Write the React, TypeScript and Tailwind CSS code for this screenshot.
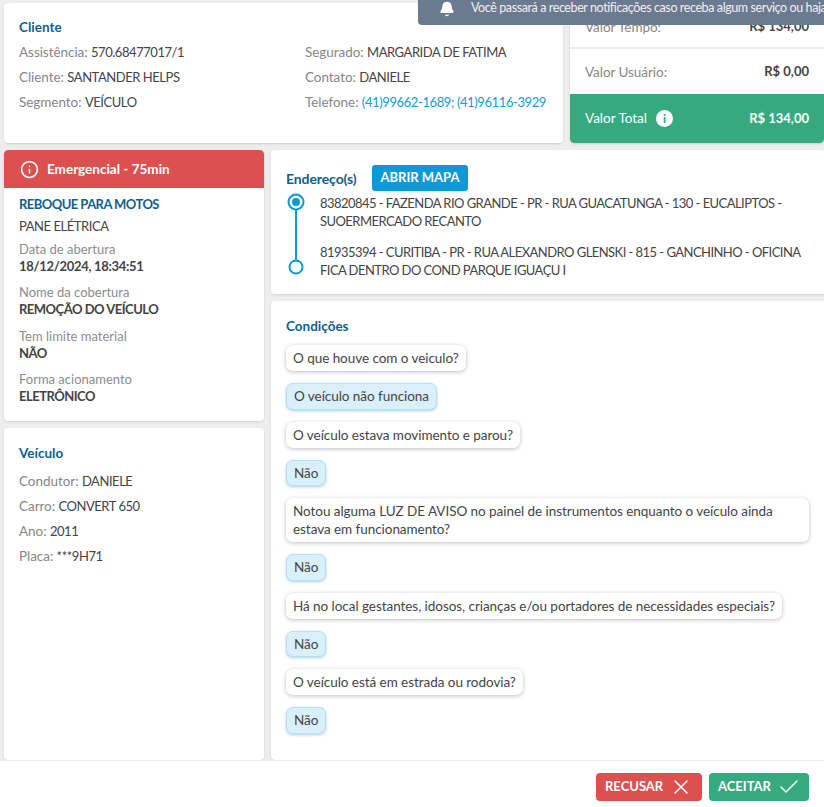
import { Bell, Info, X, Check } from 'lucide-react';

const questions = [
  { q: 'O que houve com o veiculo?', a: 'O veículo não funciona' },
  { q: 'O veículo estava movimento e parou?', a: 'Não' },
  { q: 'Notou alguma LUZ DE AVISO no painel de instrumentos enquanto o veículo ainda estava em funcionamento?', a: 'Não' },
  { q: 'Há no local gestantes, idosos, crianças e/ou portadores de necessidades especiais?', a: 'Não' },
  { q: 'O veículo está em estrada ou rodovia?', a: 'Não' },
];

function Field({ label, value, link }: { label: string; value: string; link?: boolean }) {
  return (
    <p className="h-[25px] leading-[25px] whitespace-nowrap text-[#868686]">
      {label}: <span className={link ? 'text-[13px] tracking-[-0.4px] text-[#169bd9]' : 'text-[13px] tracking-[-0.45px] text-[#444]'}>{value}</span>
    </p>
  );
}

function Detail({ label, value, wide }: { label: string; value: string; wide?: boolean }) {
  return (
    <div className="mt-[10.6px]">
      <p className="text-[13px] leading-[17px] tracking-normal text-[#8c8c8c]">{label}</p>
      <p className={wide ? 'text-[13px] leading-[16px] font-bold tracking-[-0.3px] text-[#444]' : 'text-[13px] leading-[16px] font-bold tracking-[-0.5px] text-[#444]'}>{value}</p>
    </div>
  );
}

export default function App() {
  return (
    <div className="relative flex h-[807px] flex-col overflow-hidden bg-[#eeeeee] text-[13.5px] tracking-[-0.05px] font-['Lato','Liberation_Sans',sans-serif]">
      {/* Toast */}
      <div className="absolute top-0 right-0 z-10 flex h-[25px] w-[406px] items-center overflow-hidden rounded-bl-[4px] bg-[#6b7a8f] pl-[21px] whitespace-nowrap text-white">
        <Bell size={16} fill="white" className="mt-[-8px] mr-[16px] shrink-0" />
        <span className="mt-[-8px] text-[12.5px] tracking-[-0.4px] text-[#eef1f5]">Você passará a receber notificações caso receba algum serviço ou haja</span>
      </div>

      <main className="flex min-h-0 flex-1 flex-col gap-[7px] pt-[3px] pl-[4px]">
        {/* Top row */}
        <div className="flex h-[140px] shrink-0 gap-[7px]">
          <section className="w-[559px] rounded-[4px] bg-white pt-[14px] pl-[15px] shadow-sm">
            <h2 className="mb-[3px] h-[20px] leading-[20px] font-bold tracking-normal text-[#0f5f8c]">Cliente</h2>
            <div className="grid grid-cols-[286px_1fr]">
              <Field label="Assistência" value="570.68477017/1" />
              <Field label="Segurado" value="MARGARIDA DE FATIMA" />
              <Field label="Cliente" value="SANTANDER HELPS" />
              <Field label="Contato" value="DANIELE" />
              <Field label="Segmento" value="VEÍCULO" />
              <Field label="Telefone" value="(41)99662-1689; (41)96116-3929" link />
            </div>
          </section>
          <section className="flex flex-1 flex-col justify-end overflow-hidden rounded-b-[4px] shadow-sm">
            <div className="flex h-[44px] shrink-0 items-start justify-between bg-white px-[15px] pt-[14px] text-[#868686]">
              <span>Valor Tempo:</span>
              <span className="text-[13px] font-bold tracking-normal text-[#444]">R$ 134,00</span>
            </div>
            <div className="mt-[2px] flex h-[45px] shrink-0 items-center justify-between bg-white px-[15px] pt-[1px] text-[#868686]">
              <span>Valor Usuário:</span>
              <span className="text-[13px] font-bold tracking-normal text-[#444]">R$ 0,00</span>
            </div>
            <div className="flex h-[49px] shrink-0 items-center justify-between rounded-b-[4px] bg-[#36a97e] px-[15px] text-white">
              <span className="flex items-center gap-[9px] tracking-normal">
                Valor Total
                <span className="flex h-[17px] w-[17px] items-center justify-center rounded-full bg-white text-[12px] leading-none font-black text-[#36a97e]">i</span>
              </span>
              <span className="text-[13px] font-bold tracking-normal">R$ 134,00</span>
            </div>
          </section>
        </div>

        {/* Body */}
        <div className="flex min-h-0 flex-1 gap-[7px]">
          <div className="flex w-[260px] shrink-0 flex-col gap-[7px]">
            <section className="h-[271px] overflow-hidden rounded-[4px] bg-white shadow-sm">
              <div className="flex h-[38px] items-center gap-[8px] rounded-t-[4px] bg-[#dc5050] pl-[16px] font-bold tracking-normal text-white">
                <Info size={19} />
                Emergencial - 75min
              </div>
              <div className="pt-[7px] pl-[15px]">
                <h3 className="h-[18px] text-[13px] leading-[18px] font-bold tracking-[-0.55px] text-[#0f5f8c]">REBOQUE PARA MOTOS</h3>
                <p className="mt-[4px] mb-[-5px] text-[13px] leading-[18px] tracking-[-0.45px] text-[#444]">PANE ELÉTRICA</p>
                <Detail label="Data de abertura" value="18/12/2024, 18:34:51" wide />
                <Detail label="Nome da cobertura" value="REMOÇÃO DO VEÍCULO" />
                <Detail label="Tem limite material" value="NÃO" />
                <Detail label="Forma acionamento" value="ELETRÔNICO" />
              </div>
            </section>
            <section className="flex-1 rounded-[4px] bg-white pt-[15px] pl-[15px] shadow-sm">
              <h2 className="mb-[6px] h-[20px] leading-[20px] font-bold tracking-normal text-[#0f5f8c]">Veículo</h2>
              <Field label="Condutor" value="DANIELE" />
              <Field label="Carro" value="CONVERT 650" />
              <Field label="Ano" value="2011" />
              <Field label="Placa" value="***9H71" />
            </section>
          </div>

          <div className="flex min-w-0 flex-1 flex-col gap-[7px]">
            <section className="h-[144px] shrink-0 rounded-l-[4px] bg-white pt-[15px] pl-[15px] shadow-sm">
              <div className="flex items-center gap-[14px]">
                <h2 className="w-[72px] text-[14px] font-bold tracking-[-0.1px] whitespace-nowrap text-[#0f5f8c]">Endereço(s)</h2>
                <span className="flex h-[26px] w-[96px] items-center justify-center rounded-[3px] bg-[#0b9ad6] text-[13px] font-bold tracking-normal text-white">ABRIR MAPA</span>
              </div>
              <div className="mt-[2px] flex gap-[14px]">
                <svg width="20" height="82" viewBox="0 0 20 82" className="shrink-0" fill="none" stroke="#0b9ad6" strokeWidth="2">
                  <circle cx="10" cy="9" r="7.5" />
                  <circle cx="10" cy="9" r="4" fill="#0b9ad6" stroke="none" />
                  <path d="M10 16V68" />
                  <circle cx="10" cy="74" r="6.5" />
                </svg>
                <div className="mt-[1px] w-[490px] text-[13px] leading-[18px] tracking-[-0.55px] text-[#444]">
                  <p>83820845 - FAZENDA RIO GRANDE - PR - RUA GUACATUNGA - 130 - EUCALIPTOS - SUOERMERCADO RECANTO</p>
                  <p className="mt-[13px]">81935394 - CURITIBA - PR - RUA ALEXANDRO GLENSKI - 815 - GANCHINHO - OFICINA FICA DENTRO DO COND PARQUE IGUAÇU I</p>
                </div>
              </div>
            </section>

            <section className="flex-1 overflow-hidden rounded-l-[4px] bg-white pt-[15px] pl-[15px] shadow-sm">
              <h2 className="mb-[9px] h-[20px] leading-[20px] font-bold tracking-normal text-[#0f5f8c]">Condições</h2>
              <div className="flex flex-col items-start gap-[12px]">
                {questions.map((item) => (
                  <div key={item.q} className="flex flex-col items-start gap-[12px]">
                    <p className="max-w-[523px] rounded-[7px] bg-white px-[7px] py-[4px] leading-[18px] text-[#444] shadow-[0_1px_4px_rgba(0,0,0,0.25)]">{item.q}</p>
                    <p className="rounded-[7px] border border-[#b9e0f2] bg-[#d9eff9] px-[7px] py-[3px] leading-[18.5px] text-[#444] shadow-[0_1px_3px_rgba(0,120,180,0.35)]">{item.a}</p>
                  </div>
                ))}
              </div>
            </section>
          </div>
        </div>
      </main>

      <footer className="flex h-[47px] shrink-0 items-start justify-end gap-[7px] border-t border-[#eeeeee] bg-white pt-[12px] pr-[15px]">
        <button className="flex h-[28px] w-[106px] items-center gap-[6px] rounded-[4px] bg-[#dc5050] pl-[9px] text-[13px] font-bold tracking-normal text-white">
          RECUSAR <X size={24} strokeWidth={1.5} />
        </button>
        <button className="flex h-[28px] w-[100px] items-center gap-[6px] rounded-[4px] bg-[#36a97e] pl-[9px] text-[13px] font-bold tracking-normal text-white">
          ACEITAR <Check size={24} strokeWidth={1.5} />
        </button>
      </footer>
    </div>
  );
}
